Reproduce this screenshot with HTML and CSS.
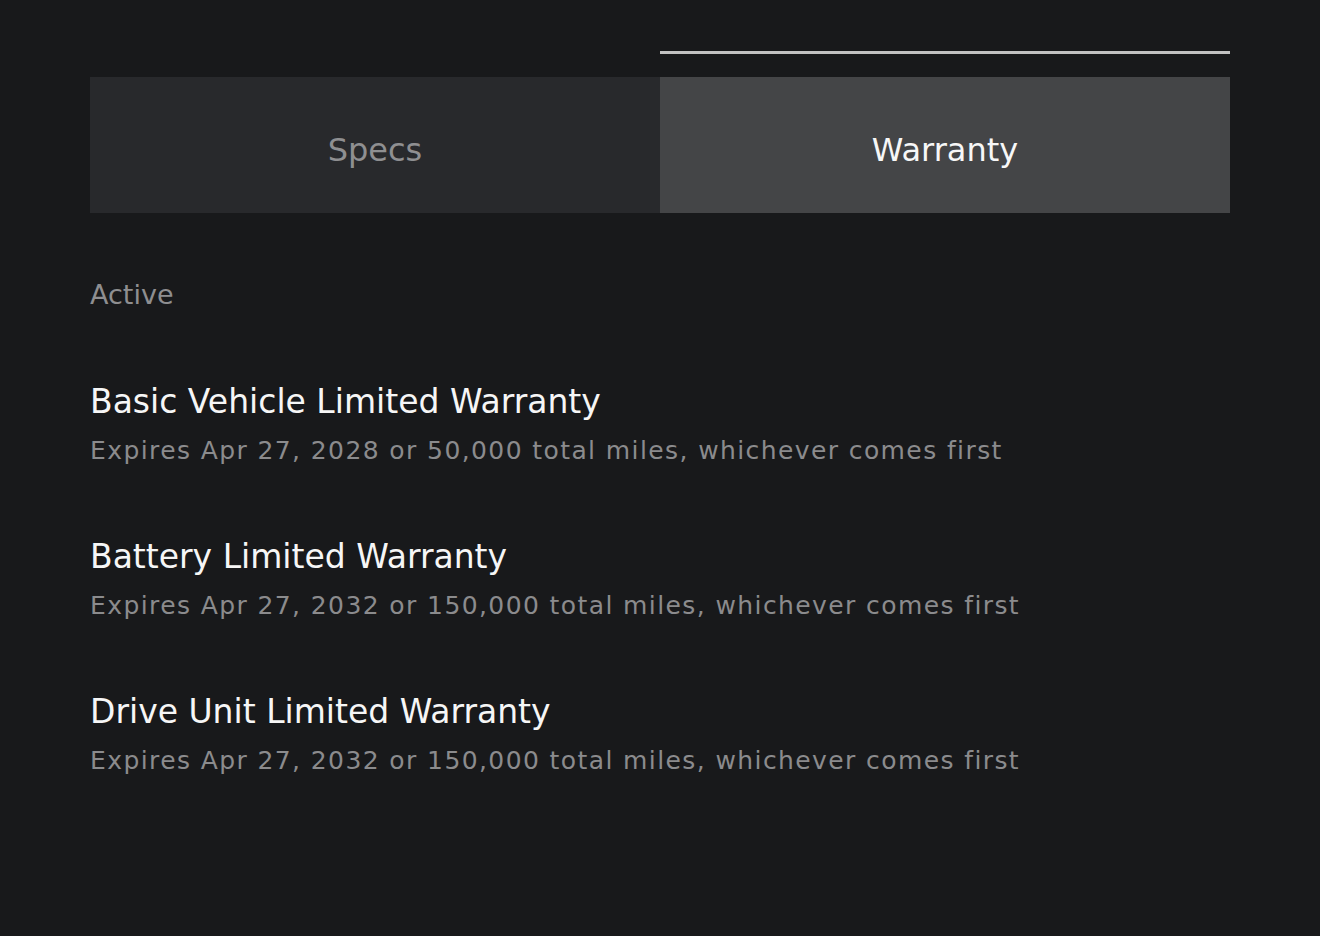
FILE: index.html
```html
<!DOCTYPE html>
<html lang="en">
  <head>
    <meta charset="UTF-8" />
    <title>Vehicle Warranty</title>
    <link rel="stylesheet" href="styles.css">
  </head>
  <body>
    <div class="panel">
      <div class="tab-indicator"><span class="tab-indicator-bar"></span></div>
      <div class="tabs">
        <div class="tab">Specs</div>
        <div class="tab active">Warranty</div>
      </div>

      <div class="section-label">Active</div>

      <div class="warranty-list">
        <div class="warranty">
          <div class="warranty-title">Basic Vehicle Limited Warranty</div>
          <div class="warranty-detail">Expires Apr 27, 2028 or 50,000 total miles, whichever comes first</div>
        </div>
        <div class="warranty">
          <div class="warranty-title">Battery Limited Warranty</div>
          <div class="warranty-detail">Expires Apr 27, 2032 or 150,000 total miles, whichever comes first</div>
        </div>
        <div class="warranty">
          <div class="warranty-title">Drive Unit Limited Warranty</div>
          <div class="warranty-detail">Expires Apr 27, 2032 or 150,000 total miles, whichever comes first</div>
        </div>
      </div>
    </div>
  </body>
</html>
```

FILE: styles.css
```css
*{
    box-sizing: border-box;
    margin: 0;
    padding: 0;
}
html, body{
    height: 100%;
}
body{
    font-family: "DejaVu Sans", Roboto, sans-serif;
    background-color: #18191b;
    color: #f5f5f5;
}
.panel{
    width: 1140px;
    margin-left: 90px;
    padding-top: 51px;
}
.tab-indicator{
    display: flex;
    justify-content: flex-end;
}
.tab-indicator-bar{
    width: 50%;
    height: 3px;
    background-color: #c2c2c2;
}
.tabs{
    display: grid;
    grid-template-columns: 1fr 1fr;
    margin-top: 23px;
    height: 136px;
}
.tab{
    display: flex;
    justify-content: center;
    align-items: center;
    padding-top: 10px;
    font-size: 32px;
    color: #8f8f91;
    background-color: #28292c;
}
.tab.active{
    color: #f7f7f7;
    background-color: #444547;
}
.section-label{
    margin-top: 67px;
    font-size: 27px;
    line-height: 30px;
    color: #8e8e90;
}
.warranty-list{
    display: flex;
    flex-direction: column;
    gap: 71px;
    margin-top: 72px;
}
.warranty-title{
    font-size: 33px;
    line-height: 40px;
    color: #f6f6f6;
}
.warranty-detail{
    margin-top: 14px;
    font-size: 25px;
    line-height: 30px;
    letter-spacing: 1.4px;
    color: #8b8b8d;
}
```
